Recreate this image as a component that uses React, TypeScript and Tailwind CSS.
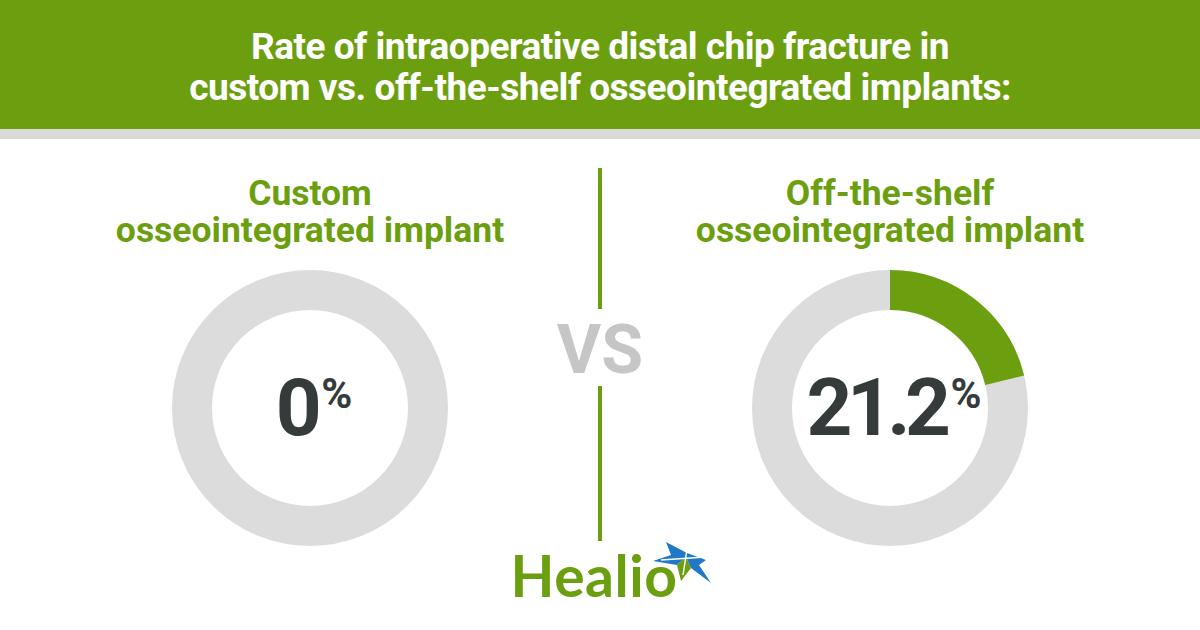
import React from "react";

const GREEN = "#6c9f10";

function Donut({ pct, value }: { pct: number; value: string }) {
  const r = 118;
  const c = 2 * Math.PI * r;
  const g = (pct / 100) * c;
  return (
    <div className="grid place-items-center w-[276px] h-[276px] mt-[21px]">
      <svg
        className="col-start-1 row-start-1"
        width="276"
        height="276"
        viewBox="0 0 276 276"
      >
        <circle cx="138" cy="138" r={r} fill="none" stroke="#dcdcdc" strokeWidth="40" />
        {pct > 0 && (
          <circle
            cx="138"
            cy="138"
            r={r}
            fill="none"
            stroke={GREEN}
            strokeWidth="40"
            strokeDasharray={`${g} ${c}`}
            transform="rotate(-90 138 138)"
          />
        )}
      </svg>
      <div className="col-start-1 row-start-1 flex items-start text-[#353a3b] font-[Roboto,sans-serif] font-bold pl-[8px]">
        <span className="text-[80px] leading-none tracking-[-5.5px]">{value}</span>
        <span className="text-[42px] leading-none mt-[5px] ml-[5px]">%</span>
      </div>
    </div>
  );
}

function Star() {
  return (
    <svg
      className="absolute left-[128px] top-[-12px]"
      width="80"
      height="60"
      viewBox="0 0 80 60"
    >
      <polygon
        points="14,26 32,20 27,7 48,18 67,25 60,30 72,48 52,33 47,22 38,30"
        fill="#1f78c8"
      />
      <polygon points="52,33 42,46 38,30 47,22" fill={GREEN} />
      <line x1="49" y1="8" x2="44" y2="40" stroke="#ffffff" strokeWidth="1.5" />
      <line x1="22" y1="25" x2="66" y2="22" stroke="#ffffff" strokeWidth="1.5" />
    </svg>
  );
}

export default function App() {
  return (
    <div className="w-[1200px] h-[630px] bg-white overflow-hidden font-[Roboto,sans-serif]">
      <div className="h-[129px] bg-[#6c9f10] pt-[26px] text-center text-white font-bold text-[37px] leading-[41px] tracking-[-0.5px]">
        <div>Rate of intraoperative distal chip fracture in</div>
        <div>custom vs. off-the-shelf osseointegrated implants:</div>
      </div>
      <div className="h-[10px] bg-[#dadada]" />
      <div className="flex px-[22px]">
        <div className="w-[576px] flex flex-col items-center pt-[36px]">
          <h3 className="text-[35.5px] leading-[37px] font-bold text-center text-[#6c9f10]">
            Custom
            <br />
            osseointegrated implant
          </h3>
          <Donut pct={0} value="0" />
        </div>
        <div className="w-[4px] flex flex-col items-center">
          <div className="w-[4px] h-[141px] mt-[29px] bg-[#6c9f10] shrink-0" />
          <div className="text-[68px] leading-none font-bold text-[#c6c6c6] mt-[7px] shrink-0">
            VS
          </div>
          <div className="w-[4px] h-[155px] mt-[2px] bg-[#6c9f10] shrink-0" />
          <div className="relative mt-[6px] shrink-0 mr-[12px]">
            <div className="font-[Lato,sans-serif] font-bold text-[57px] leading-none tracking-[0.5px] text-[#6c9f10]">
              Healio
            </div>
            <Star />
          </div>
        </div>
        <div className="w-[576px] flex flex-col items-center pt-[36px]">
          <h3 className="text-[35.5px] leading-[37px] font-bold text-center text-[#6c9f10]">
            Off-the-shelf
            <br />
            osseointegrated implant
          </h3>
          <Donut pct={21.2} value="21.2" />
        </div>
      </div>
    </div>
  );
}
